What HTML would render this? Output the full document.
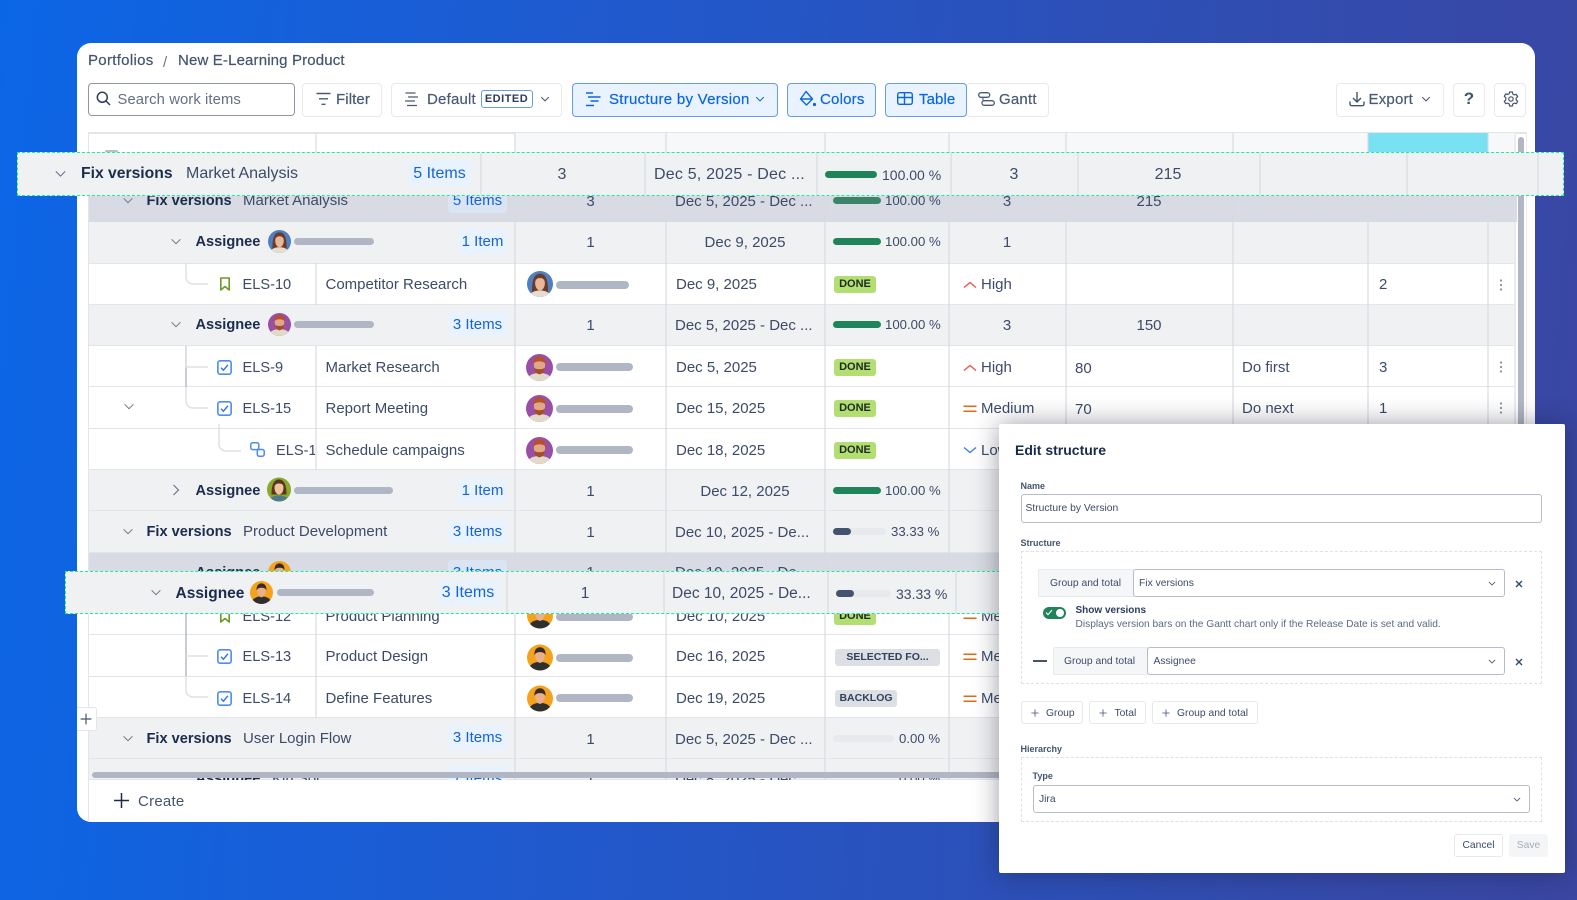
<!DOCTYPE html>
<html><head><meta charset="utf-8"><title>Structure by Version</title>
<style>
html,body{margin:0;padding:0}
body{width:1577px;height:900px;overflow:hidden;position:relative;font-family:"Liberation Sans",sans-serif;background:linear-gradient(95deg,#0b66e6 0%,#1f5acf 35%,#2c50b8 65%,#3b46a2 100%)}
.a{position:absolute}
.t{position:absolute;line-height:20px;height:20px;white-space:nowrap;color:#3c4b68;font-size:15px;margin-top:1px}
.c{transform:translateX(-50%)}
.bd{font-weight:700;color:#1b2c4d;font-size:14.6px}
.btn{position:absolute;top:83px;height:32px;background:#fff;border:1.5px solid #e8eaee;border-radius:4px;box-sizing:content-box}
.blue{background:#e9f2ff;border-color:#659de9}
.tb{color:#4a5a75;font-size:15px;top:89px;font-weight:400;-webkit-text-stroke:.2px currentColor}
.bl{color:#0c66e4}
.pc{font-size:13.2px;margin-top:0}
.p{position:absolute;background:#e9f2ff;color:#1463d8;border-radius:3px;height:25px;line-height:25px;text-align:center;font-size:15px;white-space:nowrap}
.r{position:absolute;left:88px;width:1426px;box-sizing:border-box;border-bottom:1.5px solid #e3e5ea}
.g{background:#f0f1f3}.w{background:#fff}.d{background:#d8dbe3}
.v{position:absolute;width:2px;background:rgba(214,217,224,.55)}
.bar{position:absolute;height:8px;border-radius:4px;background:#b0b6c3}
.pr{position:absolute;height:7px;border-radius:4px;background:#e7e9ed}
.fl{position:absolute;left:0;top:0;height:7px;border-radius:4px;background:#1f845a}
.sl{background:#44546f}
.bg{position:absolute;height:17px;line-height:17px;border-radius:3px;background:#b3df72;color:#1d2b22;font-weight:700;font-size:11px;text-align:center;white-space:nowrap}
.gb{background:#dcdfe4;color:#33415c;font-size:10.5px}
svg{position:absolute;overflow:visible}
.float{position:absolute;background:#f0f1f3;box-sizing:border-box;border:1.5px dashed #16ee9c}
.m{position:absolute;font-size:10.3px;line-height:14px;height:14px;white-space:nowrap;color:#3c4b68;margin-top:1px}
.lb{font-weight:700;font-size:9px;color:#44546f;margin-top:0}
.in{position:absolute;background:#fff;border:1.5px solid #b6bcc9;border-radius:3px;box-sizing:border-box}
.ad{position:absolute;background:#f5f6f8;border:1px solid #e8eaee;box-sizing:border-box;border-radius:2px 0 0 2px}
.da{position:absolute;border:1px dashed #dfe1e6;box-sizing:border-box}
.mb{position:absolute;background:#fff;border:1px solid #e6e8ec;border-radius:3px;box-sizing:border-box;height:23px}
</style></head><body>
<svg width="0" height="0" style="position:absolute">
<defs>
<clipPath id="cc"><circle cx="12" cy="12" r="12"/></clipPath>
<symbol id="a1" viewBox="0 0 24 24"><g clip-path="url(#cc)"><rect width="24" height="24" fill="#4f7fc0"/><path d="M4.500 20C4.500 7 7 2.500 12 2.500S19.500 7 19.500 20z" fill="#6a3c2a"/><path d="M7.500 11c0-3 2-4.500 4.500-4.500s4.500 1.500 4.500 4.500c0 4-2 7-4.500 7s-4.500-3-4.500-7z" fill="#e8b79a"/><path d="M2 24c1-5 6-6 10-6s9 1 10 6z" fill="#e6dccf"/></g></symbol>
<symbol id="a2" viewBox="0 0 24 24"><g clip-path="url(#cc)"><rect width="24" height="24" fill="#994fa6"/><path d="M1 24c1-6 6-7 11-7s10 1 11 7z" fill="#e3d9c8"/><path d="M7 9c0-3 2.500-4.500 5-4.500S17 6 17 9c0 5-2.500 9-5 9s-5-4-5-9z" fill="#e2a785"/><path d="M6.500 9c-.5-4.500 2.500-7 5.500-7s6 2.500 5.500 7c-1-2-3.500-2.500-5.500-2.500S7.500 7 6.500 9z" fill="#b5512b"/><path d="M7.300 12c1 2 8.400 2 9.400 0 0 3-2.200 6-4.700 6s-4.700-3-4.700-6z" fill="#a34e2a"/></g></symbol>
<symbol id="a3" viewBox="0 0 24 24"><g clip-path="url(#cc)"><rect width="24" height="24" fill="#8aa82a"/><path d="M4.500 17C4.500 7 7 2 12 2s7.500 5 7.500 15z" fill="#5a3520"/><path d="M7.500 10c0-3 2-4 4.500-4s4.500 1 4.500 4c0 4-2 7-4.500 7s-4.500-3-4.500-7z" fill="#efc2a0"/><path d="M2 24c1-5 6-6 10-6s9 1 10 6z" fill="#4f7a8a"/></g></symbol>
<symbol id="a4" viewBox="0 0 24 24"><g clip-path="url(#cc)"><rect width="24" height="24" fill="#f5a31c"/><path d="M1 24c1-6 6-8 11-8s10 2 11 8z" fill="#2f2f2f"/><path d="M7.500 9c0-3 2-4 4.500-4s4.500 1 4.500 4c0 4-2 8-4.500 8s-4.500-4-4.500-8z" fill="#e8b08c"/><path d="M7 10c-.7-5 2-7.500 5-7.500S17.700 5 17 10c-.5-2-2-3-5-3s-4.500 1-5 3z" fill="#3a2a22"/></g></symbol>
<symbol id="chd" viewBox="0 0 12 8"><path d="M1 1.500l5 5 5-5" fill="none" stroke="#6b778c" stroke-width="1.200"/></symbol>
<symbol id="chb" viewBox="0 0 12 8"><path d="M1 1.500l5 5 5-5" fill="none" stroke="#44546f" stroke-width="1.300"/></symbol>
<symbol id="chu" viewBox="0 0 12 8"><path d="M1 1.500l5 5 5-5" fill="none" stroke="#0c66e4" stroke-width="1.300"/></symbol>
<symbol id="tk" viewBox="0 0 14 14"><rect x=".8" y=".8" width="12.400" height="12.400" rx="2" fill="#fff" stroke="#4c8df0" stroke-width="1.500"/><path d="M3.800 7.200l2.200 2.300 4.200-5" fill="none" stroke="#2a73e8" stroke-width="1.300"/></symbol>
<symbol id="bm" viewBox="0 0 14 14"><path d="M2.800 1h8.400v12L7 9.500 2.800 13z" fill="#fff" stroke="#6a9a23" stroke-width="1.600" stroke-linejoin="round"/></symbol>
<symbol id="hi" viewBox="0 0 14 8"><path d="M1 6.500l6-5 6 5" fill="none" stroke="#e5594b" stroke-width="1.400"/></symbol>
<symbol id="me" viewBox="0 0 14 8"><path d="M.5 1.300h13M.5 6.300h13" fill="none" stroke="#e56910" stroke-width="1.500"/></symbol>
<symbol id="lo" viewBox="0 0 14 8"><path d="M1 1.500l6 5 6-5" fill="none" stroke="#3d7fe0" stroke-width="1.400"/></symbol>
<symbol id="kb" viewBox="0 0 4 14"><circle cx="2" cy="2.500" r="1.100" fill="#8590a2"/><circle cx="2" cy="7" r="1.100" fill="#8590a2"/><circle cx="2" cy="11.500" r="1.100" fill="#8590a2"/></symbol>
<symbol id="pl" viewBox="0 0 10 10"><path d="M5 .5v9M.5 5h9" fill="none" stroke="#44546f" stroke-width="1"/></symbol>
<symbol id="xx" viewBox="0 0 8 8"><path d="M1 1l6 6M7 1L1 7" fill="none" stroke="#2c4a70" stroke-width="1.400"/></symbol>
</defs></svg>

<!-- card -->
<div class="a" style="left:77px;top:43px;width:1458px;height:779px;background:#fff;border-radius:14px"></div>
<div class="t" style="left:88px;top:50px;color:#44546f;letter-spacing:.3px;-webkit-text-stroke:.2px #44546f">Portfolios</div>
<div class="t" style="left:163px;top:52px;color:#6b778c">/</div>
<div class="t" style="left:178px;top:50px;color:#44546f;letter-spacing:.15px;-webkit-text-stroke:.2px #44546f">New E-Learning Product</div>

<!-- toolbar -->
<div class="a" style="left:87.500px;top:82.500px;width:207px;height:33.500px;box-sizing:border-box;border:1.500px solid #8e97a8;border-radius:4px"></div>
<svg style="left:96px;top:91px" width="15" height="15" viewBox="0 0 15 15"><circle cx="6.300" cy="6.300" r="5" fill="none" stroke="#2c3e5d" stroke-width="1.500"/><path d="M10 10l4 4" stroke="#2c3e5d" stroke-width="1.500"/></svg>
<div class="t" style="left:117.500px;top:89px;color:#626f86;font-size:14.800px;letter-spacing:.1px">Search work items</div>

<div class="btn" style="left:302px;width:78px"></div>
<svg style="left:316px;top:92px" width="15" height="14" viewBox="0 0 15 14"><path d="M.5 1.500h14M3 6.800h9M5.500 12.300h4" stroke="#4a5a75" stroke-width="1.400"/></svg>
<div class="t tb" style="left:336px;letter-spacing:.1px">Filter</div>

<div class="btn" style="left:391px;width:169px"></div>
<svg style="left:404px;top:91.500px" width="15" height="15" viewBox="0 0 15 15"><path d="M1.500 1h10M4 5h10M1 9h10M3 13.500h10" stroke="#4a5a75" stroke-width="1.300"/></svg>
<div class="t tb" style="left:427px;letter-spacing:.2px">Default</div>
<div class="a" style="left:480.500px;top:90px;width:52px;height:18px;box-sizing:border-box;border:1.300px solid #659de9;border-radius:3px;background:#fff;color:#2b3c59;font-weight:700;font-size:11px;line-height:16.500px;text-align:center;letter-spacing:.5px">EDITED</div>
<svg style="left:540px;top:96px" width="10" height="6"><use href="#chb" width="10" height="6"/></svg>

<div class="btn blue" style="left:572px;width:204px"></div>
<svg style="left:585px;top:91.500px" width="16" height="15" viewBox="0 0 16 15"><path d="M1 1h7M3 5h12.500M5.500 9h8M1 13.500h8" stroke="#0c66e4" stroke-width="1.600"/></svg>
<div class="t tb bl" style="left:609px;letter-spacing:.28px">Structure by Version</div>
<svg style="left:755px;top:96px" width="10" height="6"><use href="#chu" width="10" height="6"/></svg>

<div class="btn blue" style="left:787px;width:87px"></div>
<svg style="left:799px;top:90px" width="18" height="18" viewBox="0 0 18 18"><path d="M7 1.500L13.500 9 7.500 15 1.500 9z M1.500 9h12" fill="none" stroke="#0c66e4" stroke-width="1.400" stroke-linejoin="round"/><circle cx="15.500" cy="14.500" r="1.600" fill="#0c66e4"/></svg>
<div class="t tb bl" style="left:820px;letter-spacing:.2px">Colors</div>

<div class="btn" style="left:966px;width:81px"></div>
<div class="btn blue" style="left:885px;width:80px;border-color:#659de9"></div>
<svg style="left:897px;top:92px" width="16" height="13" viewBox="0 0 16 13"><rect x=".7" y=".7" width="14.600" height="11.600" rx="2" fill="none" stroke="#0c66e4" stroke-width="1.400"/><path d="M.7 5.500h14.600M7.500 .7v11.600" stroke="#0c66e4" stroke-width="1.400"/></svg>
<div class="t tb bl" style="left:919px;letter-spacing:.1px">Table</div>
<svg style="left:978px;top:91.500px" width="17" height="14" viewBox="0 0 17 14"><rect x=".7" y=".7" width="11" height="4.600" rx="2.300" fill="none" stroke="#4a5a75" stroke-width="1.300"/><rect x="4" y="8.700" width="12.300" height="4.600" rx="2.300" fill="none" stroke="#4a5a75" stroke-width="1.300"/><path d="M5 5.300v3.400" stroke="#4a5a75" stroke-width="1"/></svg>
<div class="t tb" style="left:999px;letter-spacing:.2px">Gantt</div>

<div class="btn" style="left:1335.500px;width:106px"></div>
<svg style="left:1348.500px;top:90.500px" width="16" height="16" viewBox="0 0 16 16"><path d="M8 1v9.500M4 7l4 4 4-4" fill="none" stroke="#44546f" stroke-width="1.400"/><path d="M1 10.500V13a1.700 1.700 0 0 0 1.700 1.700h10.600A1.700 1.700 0 0 0 15 13v-2.500" fill="none" stroke="#44546f" stroke-width="1.400"/></svg>
<div class="t tb" style="left:1368.500px;letter-spacing:.2px">Export</div>
<svg style="left:1421px;top:96px" width="10" height="6"><use href="#chb" width="10" height="6"/></svg>
<div class="btn" style="left:1453px;width:30px"></div>
<div class="t c" style="left:1469px;top:88px;color:#44546f;font-weight:700;font-size:17px">?</div>
<div class="btn" style="left:1494px;width:30px"></div>
<svg style="left:1502.500px;top:91px" width="16" height="16" viewBox="0 0 16 16"><path d="M6.600 1h2.800l.4 2 1.500.9 2-.6 1.400 2.400-1.500 1.400v1.800l1.500 1.400-1.400 2.400-2-.6-1.500.9-.4 2H6.600l-.4-2-1.500-.9-2 .6-1.400-2.400 1.500-1.400V6.700L1.300 5.300l1.400-2.400 2 .6 1.500-.9z" fill="none" stroke="#44546f" stroke-width="1.200" stroke-linejoin="round"/><circle cx="8" cy="8" r="2.200" fill="none" stroke="#44546f" stroke-width="1.200"/></svg>

<!-- table frame -->
<div class="a" style="left:88px;top:132px;width:1439px;height:1.500px;background:#e3e5ea"></div>
<div class="a" style="left:87.500px;top:132px;width:1.500px;height:690px;background:#e3e5ea"></div>
<div class="a" style="left:1525.500px;top:132px;width:1.500px;height:648px;background:#e9ebee"></div>
<div class="a" style="left:1514px;top:132px;width:1.500px;height:648px;background:#e9ebee"></div>

<!-- table clip -->
<div class="a" style="left:0;top:0;width:1577px;height:900px;clip-path:polygon(89px 133px,1518px 133px,1518px 780px,89px 780px)">
<div class="a" style="left:515px;top:133px;width:999px;height:48px;background:#f7f8f9"></div>
<div class="a" style="left:1368px;top:133px;width:120px;height:48px;background:#79e2f2"></div>
<div class="a" style="left:105px;top:150px;width:13px;height:3px;background:#b9bfca;border-radius:2px"></div>

<div class="r d" style="top:180px;height:42px;width:1429px;border:0"></div>
<div class="r g" style="top:222px;height:41.500px"></div>
<div class="r w" style="top:263.500px;height:41px"></div>
<div class="r g" style="top:304.500px;height:41.500px"></div>
<div class="r w" style="top:346px;height:41px"></div>
<div class="r w" style="top:387px;height:41.500px"></div>
<div class="r w" style="top:428.500px;height:41px"></div>
<div class="r g" style="top:469.500px;height:41.500px"></div>
<div class="r g" style="top:511px;height:41.500px"></div>
<div class="r d" style="top:552.500px;height:41.500px"></div>
<div class="r w" style="top:594px;height:41px"></div>
<div class="r w" style="top:635px;height:41.500px"></div>
<div class="r w" style="top:676.500px;height:41.500px"></div>
<div class="r g" style="top:718px;height:41px"></div>
<div class="r g" style="top:759px;height:21px"></div>

<!-- verticals -->
<div class="v" style="left:315px;top:133px;height:48px"></div>
<div class="v" style="left:315px;top:263px;height:42px"></div>
<div class="v" style="left:315px;top:346px;height:124px"></div>
<div class="v" style="left:315px;top:594px;height:124px"></div>
<div class="v" style="left:514px;top:133px;height:647px"></div>
<div class="v" style="left:665px;top:133px;height:647px"></div>
<div class="v" style="left:824px;top:133px;height:647px"></div>
<div class="v" style="left:948px;top:133px;height:647px"></div>
<div class="v" style="left:1065px;top:133px;height:647px"></div>
<div class="v" style="left:1232px;top:133px;height:647px"></div>
<div class="v" style="left:1367px;top:133px;height:647px"></div>
<div class="v" style="left:1487px;top:133px;height:647px"></div>

<!-- row: dark fix versions -->
<svg style="left:122px;top:197px" width="12" height="7"><use href="#chd" width="12" height="7"/></svg>
<div class="t bd" style="left:146.500px;top:190px">Fix versions</div>
<div class="t" style="left:243px;top:190px">Market Analysis</div>
<div class="p" style="left:448px;top:188px;width:59px;background:#dbe4f3">5 Items</div>
<div class="t c" style="left:590.500px;top:191px">3</div>
<div class="t" style="left:675px;top:191px">Dec 5, 2025 - Dec ...</div>
<div class="pr" style="left:833px;top:197px;width:47.500px"><div class="fl" style="width:100%;background:#3c8468"></div></div>
<div class="t pc" style="left:885px;top:191px">100.00 %</div>
<div class="t c" style="left:1007px;top:191px">3</div>
<div class="t c" style="left:1149px;top:191px">215</div>

<!-- Assignee 1 -->
<svg style="left:170px;top:238px" width="12" height="7"><use href="#chd" width="12" height="7"/></svg>
<div class="t bd" style="left:195.500px;top:231px">Assignee</div>
<svg style="left:267.500px;top:229.500px" width="23" height="23"><use href="#a1" width="23" height="23"/></svg>
<div class="bar" style="left:294px;top:238px;width:80px;height:7px"></div>
<div class="p" style="left:458px;top:229px;width:49px">1 Item</div>
<div class="t c" style="left:590.500px;top:232px">1</div>
<div class="t c" style="left:745px;top:232px">Dec 9, 2025</div>
<div class="pr" style="left:833px;top:238px;width:47.500px"><div class="fl" style="width:100%"></div></div>
<div class="t pc" style="left:885px;top:232px">100.00 %</div>
<div class="t c" style="left:1007px;top:232px">1</div>

<!-- ELS-10 -->
<svg style="left:186px;top:263px" width="23" height="22" fill="none"><path d="M0 0v14a7 7 0 0 0 7 7h15" stroke="#dfe1e6" stroke-width="1.500"/></svg>
<svg style="left:217.500px;top:277px" width="14" height="14"><use href="#bm" width="14" height="14"/></svg>
<div class="t" style="left:242.500px;top:274px;font-size:14.600px">ELS-10</div>
<div class="t" style="left:325.500px;top:274px">Competitor Research</div>
<svg style="left:526.500px;top:271px" width="26" height="26"><use href="#a1" width="26" height="26"/></svg>
<div class="bar" style="left:556px;top:280.500px;width:73px"></div>
<div class="t" style="left:676px;top:274px">Dec 9, 2025</div>
<div class="bg" style="left:834px;top:276px;width:42px">DONE</div>
<svg style="left:962.500px;top:281px" width="14" height="8"><use href="#hi" width="14" height="8"/></svg>
<div class="t" style="left:981px;top:274px">High</div>
<div class="t" style="left:1379px;top:274px">2</div>
<svg style="left:1498.500px;top:277.500px" width="4" height="14"><use href="#kb" width="4" height="14"/></svg>

<!-- Assignee 2 -->
<svg style="left:170px;top:321px" width="12" height="7"><use href="#chd" width="12" height="7"/></svg>
<div class="t bd" style="left:195.500px;top:314px">Assignee</div>
<svg style="left:267.500px;top:312.500px" width="23" height="23"><use href="#a2" width="23" height="23"/></svg>
<div class="bar" style="left:294px;top:321px;width:80px;height:7px"></div>
<div class="p" style="left:448px;top:312px;width:59px">3 Items</div>
<div class="t c" style="left:590.500px;top:315px">1</div>
<div class="t" style="left:675px;top:315px">Dec 5, 2025 - Dec ...</div>
<div class="pr" style="left:833px;top:321px;width:47.500px"><div class="fl" style="width:100%"></div></div>
<div class="t pc" style="left:885px;top:315px">100.00 %</div>
<div class="t c" style="left:1007px;top:315px">3</div>
<div class="t c" style="left:1149px;top:315px">150</div>

<!-- ELS-9 -->
<svg style="left:185px;top:346px" width="24" height="64" fill="none"><path d="M1 0v41" stroke="#b4bac5" stroke-width="1.500"/><path d="M1 0v21h22" stroke="#dfe1e6" stroke-width="1.500"/><path d="M1 41v14a7 7 0 0 0 7 7h15" stroke="#dfe1e6" stroke-width="1.500"/></svg>
<svg style="left:217px;top:360px" width="15" height="15"><use href="#tk" width="15" height="15"/></svg>
<div class="t" style="left:242.500px;top:357px;font-size:14.600px">ELS-9</div>
<div class="t" style="left:325.500px;top:357px">Market Research</div>
<svg style="left:526px;top:353px" width="27" height="29"><use href="#a2" width="27" height="29"/></svg>
<div class="bar" style="left:556px;top:363px;width:77px"></div>
<div class="t" style="left:676px;top:357px">Dec 5, 2025</div>
<div class="bg" style="left:834px;top:358.500px;width:42px">DONE</div>
<svg style="left:962.500px;top:363.500px" width="14" height="8"><use href="#hi" width="14" height="8"/></svg>
<div class="t" style="left:981px;top:357px">High</div>
<div class="t" style="left:1075px;top:358px">80</div>
<div class="t" style="left:1242px;top:357px">Do first</div>
<div class="t" style="left:1379px;top:357px">3</div>
<svg style="left:1498.500px;top:360px" width="4" height="14"><use href="#kb" width="4" height="14"/></svg>

<!-- ELS-15 -->
<svg style="left:123px;top:403px" width="12" height="7"><use href="#chd" width="12" height="7"/></svg>
<svg style="left:217px;top:401px" width="15" height="15"><use href="#tk" width="15" height="15"/></svg>
<div class="t" style="left:242.500px;top:398px;font-size:14.600px">ELS-15</div>
<div class="t" style="left:325.500px;top:398px">Report Meeting</div>
<svg style="left:526px;top:394px" width="27" height="29"><use href="#a2" width="27" height="29"/></svg>
<div class="bar" style="left:556px;top:404.500px;width:77px"></div>
<div class="t" style="left:676px;top:398px">Dec 15, 2025</div>
<div class="bg" style="left:834px;top:400px;width:42px">DONE</div>
<svg style="left:962.500px;top:404.500px" width="14" height="8"><use href="#me" width="14" height="8"/></svg>
<div class="t" style="left:981px;top:398px">Medium</div>
<div class="t" style="left:1075px;top:399px">70</div>
<div class="t" style="left:1242px;top:398px">Do next</div>
<div class="t" style="left:1379px;top:398px">1</div>
<svg style="left:1498.500px;top:401px" width="4" height="14"><use href="#kb" width="4" height="14"/></svg>

<!-- ELS-1x -->
<svg style="left:218px;top:424px" width="24" height="29" fill="none"><path d="M1 0v20a7 7 0 0 0 7 7h15" stroke="#dfe1e6" stroke-width="1.500"/></svg>
<svg style="left:250px;top:442px" width="15" height="15" viewBox="0 0 15 15"><rect x=".8" y=".8" width="8" height="6.800" rx="1.800" fill="#fff" stroke="#4c8df0" stroke-width="1.500"/><rect x="7.300" y="7.500" width="6.900" height="6.700" rx="1.800" fill="#fff" stroke="#4c8df0" stroke-width="1.500"/></svg>
<div class="a" style="left:276px;top:430px;width:39px;height:38px;overflow:hidden"><div class="t" style="left:0;top:9.500px;font-size:14.600px">ELS-16</div></div>
<div class="t" style="left:325.500px;top:439.500px">Schedule campaigns</div>
<svg style="left:526px;top:435.500px" width="27" height="29"><use href="#a2" width="27" height="29"/></svg>
<div class="bar" style="left:556px;top:446px;width:77px"></div>
<div class="t" style="left:676px;top:439.500px">Dec 18, 2025</div>
<div class="bg" style="left:834px;top:441.500px;width:42px">DONE</div>
<svg style="left:962.500px;top:446px" width="14" height="8"><use href="#lo" width="14" height="8"/></svg>
<div class="t" style="left:981px;top:439.500px">Low</div>

<!-- Assignee 3 -->
<svg style="left:170px;top:484px" width="12" height="12" viewBox="0 0 12 12"><path d="M3.500 1l5 5-5 5" fill="none" stroke="#6b778c" stroke-width="1.200"/></svg>
<div class="t bd" style="left:195.500px;top:479.500px">Assignee</div>
<svg style="left:267px;top:477px" width="24" height="25"><use href="#a3" width="24" height="25"/></svg>
<div class="bar" style="left:294px;top:486.500px;width:98.500px;height:7px"></div>
<div class="p" style="left:458px;top:477.500px;width:49px">1 Item</div>
<div class="t c" style="left:590.500px;top:480.500px">1</div>
<div class="t c" style="left:745px;top:480.500px">Dec 12, 2025</div>
<div class="pr" style="left:833px;top:486.500px;width:47.500px"><div class="fl" style="width:100%"></div></div>
<div class="t pc" style="left:885px;top:480.500px">100.00 %</div>

<!-- Fix versions 2 -->
<svg style="left:122px;top:528px" width="12" height="7"><use href="#chd" width="12" height="7"/></svg>
<div class="t bd" style="left:146.500px;top:520.500px">Fix versions</div>
<div class="t" style="left:243px;top:520.500px">Product Development</div>
<div class="p" style="left:448px;top:518.500px;width:59px">3 Items</div>
<div class="t c" style="left:590.500px;top:521.500px">1</div>
<div class="t" style="left:675px;top:521.500px">Dec 10, 2025 - De...</div>
<div class="pr" style="left:833px;top:528px;width:53px"><div class="fl sl" style="width:17.500px"></div></div>
<div class="t pc" style="left:891px;top:522px">33.33 %</div>

<!-- dark assignee -->
<div class="t bd" style="left:195.500px;top:562px">Assignee</div>
<svg style="left:267.500px;top:561px" width="23" height="23"><use href="#a4" width="23" height="23"/></svg>
<div class="p" style="left:448px;top:560px;width:59px;background:#dbe4f3">3 Items</div>
<div class="t" style="left:675px;top:562px">Dec 10, 2025 - De...</div>
<div class="t c" style="left:590.500px;top:562px">1</div>

<!-- ELS-12 -->
<svg style="left:185px;top:594px" width="24" height="106" fill="none"><path d="M1 0v82" stroke="#b4bac5" stroke-width="1.500"/><path d="M1 62h22" stroke="#dfe1e6" stroke-width="1.500"/><path d="M1 82v14a7 7 0 0 0 7 7h15" stroke="#dfe1e6" stroke-width="1.500"/></svg>
<svg style="left:217.500px;top:609px" width="14" height="14"><use href="#bm" width="14" height="14"/></svg>
<div class="t" style="left:242.500px;top:606px;font-size:14.600px">ELS-12</div>
<div class="t" style="left:325.500px;top:606px">Product Planning</div>
<svg style="left:526.500px;top:602px" width="26" height="27"><use href="#a4" width="26" height="27"/></svg>
<div class="bar" style="left:556px;top:613px;width:77px"></div>
<div class="t" style="left:676px;top:606px">Dec 10, 2025</div>
<div class="bg" style="left:834px;top:608px;width:42px">DONE</div>
<svg style="left:962.500px;top:612px" width="14" height="8"><use href="#me" width="14" height="8"/></svg>
<div class="t" style="left:981px;top:606px">Medium</div>

<!-- ELS-13 -->
<svg style="left:217px;top:649px" width="15" height="15"><use href="#tk" width="15" height="15"/></svg>
<div class="t" style="left:242.500px;top:646px;font-size:14.600px">ELS-13</div>
<div class="t" style="left:325.500px;top:646px">Product Design</div>
<svg style="left:526.500px;top:643.500px" width="26" height="27"><use href="#a4" width="26" height="27"/></svg>
<div class="bar" style="left:556px;top:653.500px;width:77px"></div>
<div class="t" style="left:676px;top:646px">Dec 16, 2025</div>
<div class="bg gb" style="left:835px;top:648.500px;width:105px">SELECTED FO...</div>
<svg style="left:962.500px;top:653px" width="14" height="8"><use href="#me" width="14" height="8"/></svg>
<div class="t" style="left:981px;top:646px">Medium</div>

<!-- ELS-14 -->
<svg style="left:217px;top:690.500px" width="15" height="15"><use href="#tk" width="15" height="15"/></svg>
<div class="t" style="left:242.500px;top:687.500px;font-size:14.600px">ELS-14</div>
<div class="t" style="left:325.500px;top:687.500px">Define Features</div>
<svg style="left:526.500px;top:684.500px" width="26" height="27"><use href="#a4" width="26" height="27"/></svg>
<div class="bar" style="left:556px;top:694px;width:77px"></div>
<div class="t" style="left:676px;top:687.500px">Dec 19, 2025</div>
<div class="bg gb" style="left:835px;top:690px;width:62px">BACKLOG</div>
<svg style="left:962.500px;top:694.500px" width="14" height="8"><use href="#me" width="14" height="8"/></svg>
<div class="t" style="left:981px;top:687.500px">Medium</div>

<!-- Fix versions 3 -->
<svg style="left:122px;top:735px" width="12" height="7"><use href="#chd" width="12" height="7"/></svg>
<div class="t bd" style="left:146.500px;top:727.500px">Fix versions</div>
<div class="t" style="left:243px;top:727.500px">User Login Flow</div>
<div class="p" style="left:448px;top:725px;width:59px">3 Items</div>
<div class="t c" style="left:590.500px;top:728.500px">1</div>
<div class="t" style="left:675px;top:728.500px">Dec 5, 2025 - Dec ...</div>
<div class="pr" style="left:833px;top:735px;width:61px"></div>
<div class="t pc" style="left:899px;top:729px">0.00 %</div>

<!-- last row, mostly clipped -->
<div class="t bd" style="left:195.500px;top:768px">Assignee</div>
<div class="t" style="left:272px;top:768px">Kiri Sol</div>
<div class="p" style="left:448px;top:766px;width:59px">7 Items</div>
<div class="t c" style="left:590.500px;top:769px">1</div>
<div class="t" style="left:675px;top:769px">Dec 8, 2025 - Dec ...</div>
<div class="t pc" style="left:899px;top:769px">0.00 %</div>
<div class="a" style="left:92px;top:772px;width:1400px;height:6px;border-radius:3px;background:#b0b6c3"></div>
</div>

<!-- vertical scrollbar -->
<div class="a" style="left:1517.500px;top:137px;width:6px;height:640px;border-radius:3px;background:#b0b6c3"></div>

<!-- left plus -->
<div class="a" style="left:77px;top:707px;width:20px;height:24px;background:#fff;border:1px solid #e3e5ea;border-left:0;box-sizing:border-box;border-radius:0 3px 3px 0"></div>
<svg style="left:80px;top:713px" width="12" height="12"><use href="#pl" width="12" height="12"/></svg>

<!-- create -->
<svg style="left:114px;top:793px" width="15" height="15" viewBox="0 0 15 15"><path d="M7.500 0v15M0 7.500h15" stroke="#1d2b44" stroke-width="1.500"/></svg>
<div class="t" style="left:138px;top:791px;color:#44546f;letter-spacing:.25px">Create</div>

<!-- floating row 1 -->
<div class="float" style="left:17px;top:152px;width:1547px;height:44px"></div>
<div class="v" style="left:480px;top:153px;height:42px"></div>
<div class="v" style="left:644px;top:153px;height:42px"></div>
<div class="v" style="left:816px;top:153px;height:42px"></div>
<div class="v" style="left:950px;top:153px;height:42px"></div>
<div class="v" style="left:1077px;top:153px;height:42px"></div>
<div class="v" style="left:1259px;top:153px;height:42px"></div>
<div class="v" style="left:1406px;top:153px;height:42px"></div>
<div class="v" style="left:1537px;top:153px;height:42px"></div>
<svg style="left:54px;top:170px" width="13" height="7.500"><use href="#chd" width="13" height="7.500"/></svg>
<div class="t bd" style="left:81px;top:163px;font-size:15.700px">Fix versions</div>
<div class="t" style="left:186px;top:163px;font-size:16px">Market Analysis</div>
<div class="p" style="left:408px;top:160px;width:63px;height:26px;line-height:27px;font-size:16px">5 Items</div>
<div class="t c" style="left:562px;top:164px;font-size:16px">3</div>
<div class="t" style="left:654px;top:164px;font-size:16px;letter-spacing:.2px">Dec 5, 2025 - Dec ...</div>
<div class="pr" style="left:825px;top:170.500px;width:52px"><div class="fl" style="width:100%"></div></div>
<div class="t pc" style="left:882px;top:164.500px;font-size:14px">100.00 %</div>
<div class="t c" style="left:1014px;top:164px;font-size:16px">3</div>
<div class="t c" style="left:1168px;top:164px;font-size:16px">215</div>

<!-- floating row 2 -->
<div class="float" style="left:64.500px;top:571px;width:1000px;height:43px"></div>
<div class="v" style="left:506px;top:572px;height:41px"></div>
<div class="v" style="left:663px;top:572px;height:41px"></div>
<div class="v" style="left:827px;top:572px;height:41px"></div>
<div class="v" style="left:955px;top:572px;height:41px"></div>
<svg style="left:150px;top:589px" width="12" height="7"><use href="#chd" width="12" height="7"/></svg>
<div class="t bd" style="left:175.500px;top:582.500px;font-size:15.500px">Assignee</div>
<svg style="left:249.500px;top:581px" width="23" height="23"><use href="#a4" width="23" height="23"/></svg>
<div class="bar" style="left:277px;top:589px;width:97px;height:7px"></div>
<div class="p" style="left:438px;top:580px;width:60px;height:25px;font-size:16px">3 Items</div>
<div class="t c" style="left:585px;top:583px;font-size:15.500px">1</div>
<div class="t" style="left:672px;top:583px;font-size:15.500px">Dec 10, 2025 - De...</div>
<div class="pr" style="left:836px;top:589.500px;width:55px"><div class="fl sl" style="width:18px"></div></div>
<div class="t pc" style="left:896px;top:583.500px;font-size:14px">33.33 %</div>

<!-- modal -->
<div class="a" style="left:998.500px;top:424px;width:566px;height:448.500px;background:#fff;border-radius:2px;box-shadow:0 0 26px rgba(20,25,40,.42)"></div>
<div class="m" style="left:1015px;top:442px;font-size:14px;font-weight:700;color:#172b4d">Edit structure</div>
<div class="m lb" style="left:1020.500px;top:479px">Name</div>
<div class="in" style="left:1020.500px;top:494px;width:521.500px;height:28.500px"></div>
<div class="m" style="left:1025.500px;top:501px">Structure by Version</div>
<div class="m lb" style="left:1020.500px;top:536px">Structure</div>
<div class="da" style="left:1020.500px;top:551px;width:521.500px;height:133px"></div>

<div class="ad" style="left:1038px;top:569px;width:96px;height:28px"></div>
<div class="m" style="left:1050px;top:576px">Group and total</div>
<div class="in" style="left:1133px;top:569px;width:372px;height:28px"></div>
<div class="m" style="left:1139px;top:576px">Fix versions</div>
<svg style="left:1487.500px;top:581px" width="8" height="5"><use href="#chb" width="8" height="5"/></svg>
<svg style="left:1515px;top:579.500px" width="8" height="8"><use href="#xx" width="8" height="8"/></svg>

<div class="a" style="left:1042.500px;top:607px;width:23px;height:11.500px;border-radius:6px;background:#1f845a"></div>
<div class="a" style="left:1055.500px;top:608.500px;width:8.500px;height:8.500px;border-radius:50%;background:#fff"></div>
<svg style="left:1045px;top:609px" width="8" height="7" viewBox="0 0 8 7"><path d="M1 3.500l2 2.200L7 1" fill="none" stroke="#fff" stroke-width="1.100"/></svg>
<div class="m" style="left:1075.500px;top:603px;font-weight:700;color:#2c3e5d;font-size:10px">Show versions</div>
<div class="m" style="left:1075.500px;top:617px;font-size:10.200px;color:#5a6a85">Displays version bars on the Gantt chart only if the Release Date is set and valid.</div>

<div class="a" style="left:1033px;top:660px;width:14px;height:1.500px;background:#44546f"></div>
<div class="ad" style="left:1052.500px;top:647px;width:95px;height:28px"></div>
<div class="m" style="left:1064px;top:654px">Group and total</div>
<div class="in" style="left:1147px;top:647px;width:358px;height:28px"></div>
<div class="m" style="left:1153.500px;top:654px">Assignee</div>
<svg style="left:1487.500px;top:659px" width="8" height="5"><use href="#chb" width="8" height="5"/></svg>
<svg style="left:1515px;top:657.500px" width="8" height="8"><use href="#xx" width="8" height="8"/></svg>

<div class="mb" style="left:1020.500px;top:701px;width:62.500px"></div>
<svg style="left:1030.500px;top:708.500px" width="8" height="8"><use href="#pl" width="8" height="8"/></svg>
<div class="m" style="left:1046px;top:705.500px">Group</div>
<div class="mb" style="left:1089px;top:701px;width:57px"></div>
<svg style="left:1099px;top:708.500px" width="8" height="8"><use href="#pl" width="8" height="8"/></svg>
<div class="m" style="left:1114.500px;top:705.500px">Total</div>
<div class="mb" style="left:1151.500px;top:701px;width:106.500px"></div>
<svg style="left:1161.500px;top:708.500px" width="8" height="8"><use href="#pl" width="8" height="8"/></svg>
<div class="m" style="left:1177px;top:705.500px">Group and total</div>

<div class="m lb" style="left:1020.500px;top:741.500px">Hierarchy</div>
<div class="da" style="left:1020.500px;top:757px;width:521.500px;height:65px"></div>
<div class="m lb" style="left:1032.500px;top:769px">Type</div>
<div class="in" style="left:1032.500px;top:784.500px;width:497.500px;height:28.500px"></div>
<div class="m" style="left:1039px;top:792px">Jira</div>
<svg style="left:1513px;top:796.500px" width="8" height="5"><use href="#chb" width="8" height="5"/></svg>

<div class="mb" style="left:1454px;top:833.500px;width:49px;text-align:center;line-height:22px;font-size:10.300px;color:#3c4b68">Cancel</div>
<div class="a" style="left:1509px;top:833.500px;width:39px;height:23px;background:#f4f5f7;border-radius:3px;text-align:center;line-height:24px;font-size:10.300px;color:#a5adba">Save</div>
</body></html>
